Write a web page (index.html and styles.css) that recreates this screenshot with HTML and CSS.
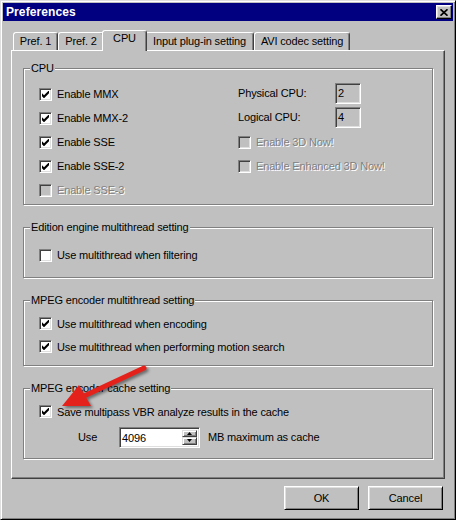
FILE: index.html
```html
<!DOCTYPE html>
<html>
<head>
<meta charset="utf-8">
<title>Preferences</title>
<link rel="stylesheet" href="styles.css">
</head>
<body>
<div class="window">
  <div class="titlebar">
    <span class="title">Preferences</span>
    <span class="close"><svg width="8" height="7" viewBox="0 0 8 7"><path d="M0.5 0.3 L7.5 6.7 M7.5 0.3 L0.5 6.7" stroke="#000" stroke-width="1.7" fill="none"/></svg></span>
  </div>
  <div class="dialog">
    <div class="tabs">
      <div class="tab tab-pref1">Pref. 1</div>
      <div class="tab tab-pref2">Pref. 2</div>
      <div class="tab tab-cpu selected">CPU</div>
      <div class="tab tab-input">Input plug-in setting</div>
      <div class="tab tab-avi">AVI codec setting</div>
    </div>
    <div class="panel">
      <div class="group group-cpu">
        <span class="group-title">CPU</span>
        <div class="cpu-grid">
          <div class="check"><span class="box checked"><svg width="7" height="7" viewBox="0 0 7 7"><path d="M0 2.3 L2 4.3 L7 -0.7 L7 2.3 L2 7.3 L0 5.3 Z" fill="#000"/></svg></span>Enable MMX</div>
          <div class="field"><span class="field-label">Physical CPU:</span><span class="readout">2</span></div>
          <div class="check"><span class="box checked"><svg width="7" height="7" viewBox="0 0 7 7"><path d="M0 2.3 L2 4.3 L7 -0.7 L7 2.3 L2 7.3 L0 5.3 Z" fill="#000"/></svg></span>Enable MMX-2</div>
          <div class="field"><span class="field-label">Logical CPU:</span><span class="readout">4</span></div>
          <div class="check"><span class="box checked"><svg width="7" height="7" viewBox="0 0 7 7"><path d="M0 2.3 L2 4.3 L7 -0.7 L7 2.3 L2 7.3 L0 5.3 Z" fill="#000"/></svg></span>Enable SSE</div>
          <div class="check disabled"><span class="box"></span>Enable 3D Now!</div>
          <div class="check"><span class="box checked"><svg width="7" height="7" viewBox="0 0 7 7"><path d="M0 2.3 L2 4.3 L7 -0.7 L7 2.3 L2 7.3 L0 5.3 Z" fill="#000"/></svg></span>Enable SSE-2</div>
          <div class="check disabled"><span class="box"></span>Enable Enhanced 3D Now!</div>
          <div class="check disabled"><span class="box"></span>Enable SSE-3</div>
        </div>
      </div>
      <div class="group group-edition">
        <span class="group-title">Edition engine multithread setting</span>
        <div class="rows rows-edition">
          <div class="check"><span class="box"></span>Use multithread when filtering</div>
        </div>
      </div>
      <div class="group group-mpeg">
        <span class="group-title">MPEG encoder multithread setting</span>
        <div class="rows rows-tight">
          <div class="check"><span class="box checked"><svg width="7" height="7" viewBox="0 0 7 7"><path d="M0 2.3 L2 4.3 L7 -0.7 L7 2.3 L2 7.3 L0 5.3 Z" fill="#000"/></svg></span>Use multithread when encoding</div>
          <div class="check"><span class="box checked"><svg width="7" height="7" viewBox="0 0 7 7"><path d="M0 2.3 L2 4.3 L7 -0.7 L7 2.3 L2 7.3 L0 5.3 Z" fill="#000"/></svg></span>Use multithread when performing motion search</div>
        </div>
      </div>
      <div class="group group-cache">
        <span class="group-title">MPEG encoder cache setting</span>
        <div class="rows rows-tight">
          <div class="check"><span class="box checked"><svg width="7" height="7" viewBox="0 0 7 7"><path d="M0 2.3 L2 4.3 L7 -0.7 L7 2.3 L2 7.3 L0 5.3 Z" fill="#000"/></svg></span>Save multipass VBR analyze results in the cache</div>
          <div class="use-row">
            <span class="use-label">Use</span>
            <span class="spin">
              <span class="spin-value">4096</span>
              <span class="spin-buttons">
                <span class="spin-btn"><svg width="5" height="3" viewBox="0 0 5 3"><path d="M2.5 0 L5 3 L0 3 Z" fill="#000"/></svg></span>
                <span class="spin-btn"><svg width="5" height="3" viewBox="0 0 5 3"><path d="M0 0 L5 0 L2.5 3 Z" fill="#000"/></svg></span>
              </span>
            </span>
            <span class="use-suffix">MB maximum as cache</span>
          </div>
        </div>
      </div>
    </div>
    <div class="buttons">
      <span class="btn">OK</span>
      <span class="btn">Cancel</span>
    </div>
  </div>
  <svg class="arrow" width="456" height="520" viewBox="0 0 456 520">
    <g class="arrow-shape">
      <path d="M144 368 L84 396" stroke="#e4221b" stroke-width="5" stroke-linecap="round" fill="none"/>
      <path d="M62 406 L79 385 L91 406 Z" fill="#e4221b"/>
    </g>
  </svg>
</div>
</body>
</html>
```

FILE: styles.css
```css
* { box-sizing: border-box; }

body {
  margin: 0;
  font-family: "Liberation Sans", Arial, sans-serif;
  font-size: 11px;
  letter-spacing: -0.15px;
  color: #000;
  background: #c0c0c0;
}

.window {
  position: relative;
  width: 456px;
  height: 520px;
  background: #c0c0c0;
  border: 1px solid;
  border-color: #dfdfdf #000 #000 #dfdfdf;
  box-shadow: inset 1px 1px #fff, inset -1px -1px #808080;
  padding: 2px 2px 3px 2px;
  display: flex;
  flex-direction: column;
}

.titlebar {
  height: 18px;
  flex: none;
  background: #000080;
  color: #fff;
  display: flex;
  align-items: center;
  justify-content: space-between;
  padding-left: 3px;
}

.title {
  font-weight: bold;
  font-size: 12px;
  letter-spacing: 0.1px;
}

.close {
  width: 16px;
  height: 14px;
  margin-right: 1px;
  background: #c0c0c0;
  border: 1px solid;
  border-color: #fff #000 #000 #fff;
  box-shadow: inset -1px -1px #808080, inset 1px 1px #dfdfdf;
  display: flex;
  align-items: center;
  justify-content: center;
}

.dialog {
  flex: 1;
  display: flex;
  flex-direction: column;
  padding: 9px 8px 0 8px;
}

.tabs {
  display: flex;
  align-items: flex-end;
  height: 21px;
  margin-left: 2px;
  margin-bottom: -1px;
  position: relative;
  z-index: 1;
}

.tab {
  height: 18px;
  margin-bottom: 1px;
  border: 1px solid;
  border-bottom: none;
  border-color: #fff #404040 transparent #fff;
  border-radius: 3px 3px 0 0;
  box-shadow: inset -1px 0 #808080;
  background: #c0c0c0;
  text-align: center;
  line-height: 17px;
  white-space: nowrap;
}

.tab-pref1 { width: 45px; }
.tab-pref2 { width: 46px; }
.tab-cpu { width: 41px; }
.tab-input { width: 109px; }
.tab-avi { width: 96px; }

.tab.selected {
  height: 21px;
  margin: 0 -2px;
  position: relative;
  z-index: 2;
  width: 45px;
  line-height: 15px;
}

.panel {
  height: 429px;
  flex: none;
  border: 1px solid;
  border-color: #fff #404040 #404040 #fff;
  box-shadow: inset -1px -1px #808080;
  padding: 17px 11px 0 11px;
  display: flex;
  flex-direction: column;
  gap: 22px;
}

.group {
  position: relative;
  border: 1px solid #808080;
  box-shadow: inset 1px 1px #fff, 1px 1px #fff;
  flex: none;
}

.group-title {
  position: absolute;
  top: -8px;
  left: 6px;
  padding: 0 1px;
  background: #c0c0c0;
  line-height: 14px;
}

.group-cpu { height: 137px; padding: 13px 0 0 15px; }
.group-edition { height: 51px; padding: 15px 0 0 15px; }
.group-mpeg { height: 66px; padding: 11px 0 0 15px; }
.group-cache { height: 71px; padding: 11px 0 0 15px; }

.cpu-grid {
  display: grid;
  grid-template-columns: 199px 1fr;
  grid-auto-rows: 24px;
}

.rows { display: flex; flex-direction: column; }
.rows-edition .check { height: 24px; }
.rows-tight .check { height: 23px; }

.check {
  display: flex;
  align-items: center;
  gap: 5px;
  white-space: nowrap;
}

.box {
  width: 13px;
  height: 13px;
  flex: none;
  background: #fff;
  border: 1px solid;
  border-color: #808080 #fff #fff #808080;
  box-shadow: inset 1px 1px #404040, inset -1px -1px #dfdfdf;
  display: flex;
  align-items: center;
  justify-content: center;
}

.box svg { display: block; }

.check.disabled { color: #808080; text-shadow: 1px 1px #fff; }
.check.disabled .box { background: #c0c0c0; }

.field {
  display: flex;
  align-items: center;
  margin-top: -2px;
}

.field-label { width: 97px; }

.readout {
  width: 26px;
  height: 21px;
  border: 1px solid;
  border-color: #808080 #fff #fff #808080;
  box-shadow: inset 1px 1px #404040, inset -1px -1px #dfdfdf;
  padding-left: 2px;
  line-height: 19px;
}

.use-row {
  display: flex;
  align-items: center;
  height: 22px;
  margin-top: 3px;
}

.use-label { width: 80px; padding-left: 39px; }

.spin {
  width: 81px;
  height: 21px;
  background: #fff;
  border: 1px solid;
  border-color: #808080 #fff #fff #808080;
  box-shadow: inset 1px 1px #404040, inset -1px -1px #dfdfdf;
  padding: 2px;
  display: flex;
  align-items: stretch;
}

.spin-value {
  flex: 1;
  line-height: 17px;
}

.spin-buttons {
  width: 15px;
  display: flex;
  flex-direction: column;
}

.spin-btn {
  flex: 1;
  background: #c0c0c0;
  border: 1px solid;
  border-color: #dfdfdf #404040 #404040 #dfdfdf;
  box-shadow: inset 1px 1px #fff, inset -1px -1px #808080;
  display: flex;
  align-items: center;
  justify-content: center;
}

.spin-btn svg { display: block; }

.use-suffix { margin-left: 8px; }

.buttons {
  display: flex;
  justify-content: flex-end;
  gap: 9px;
  margin-top: 7px;
  padding-right: 2px;
}

.btn {
  width: 75px;
  height: 24px;
  background: #c0c0c0;
  border: 1px solid;
  border-color: #fff #000 #000 #fff;
  box-shadow: inset 1px 1px #dfdfdf, inset -1px -1px #808080;
  display: flex;
  align-items: center;
  justify-content: center;
}

.arrow {
  position: absolute;
  left: -1px;
  top: -1px;
  pointer-events: none;
}

.arrow-shape {
  filter: drop-shadow(2px 2px 1.5px rgba(0, 0, 0, 0.45));
}
```
